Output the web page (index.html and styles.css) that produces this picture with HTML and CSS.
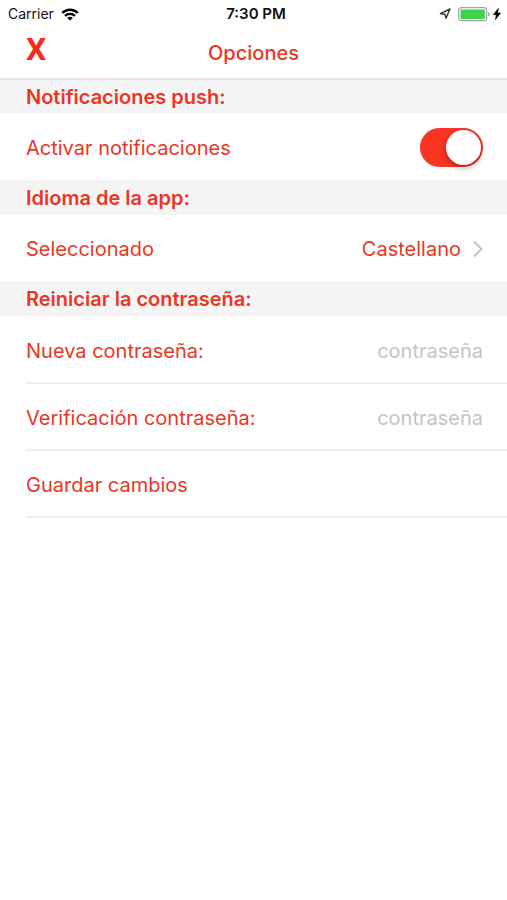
FILE: index.html
```html
<!DOCTYPE html>
<html lang="es">
<head>
<meta charset="utf-8">
<meta name="viewport" content="width=device-width, initial-scale=1">
<title>Opciones</title>
<link rel="stylesheet" href="styles.css">
</head>
<body>
<header class="top">
  <div class="status">
    <div class="status-left">
      <span>Carrier</span>
      <svg class="wifi" viewBox="0 0 18 13" aria-hidden="true"><path d="M1.2 5a11 11 0 0 1 15.6 0M4 7.9a7.1 7.1 0 0 1 10 0" fill="none" stroke="#000" stroke-width="2.3"/><path d="M9 12.6 6.2 10a4 4 0 0 1 5.6 0z"/></svg>
    </div>
    <span class="time">7:30 PM</span>
    <div class="status-right">
      <svg class="location" viewBox="0 0 12 12" aria-hidden="true"><path d="M11 1 7 10.3 6 6.2 1.4 5.7z" fill="none" stroke="#333" stroke-width="1.4" stroke-linejoin="round"/></svg>
      <svg class="battery" viewBox="0 0 32 15" aria-hidden="true"><rect x=".7" y=".7" width="28" height="13" rx="2.8" fill="#fff" stroke="#a3a3a3" stroke-width="1.2"/><rect x="2.5" y="2.5" width="24.4" height="9.4" rx="1" fill="#3fd44f"/><path d="M30 5v4.6q1.6-.6 1.6-2.3T30 5z" fill="#a3a3a3"/></svg>
      <svg class="bolt" viewBox="0 0 8 12" aria-hidden="true"><path d="M5.5.2.3 6.7h3L2.3 11.8 7.7 5H4.6z" stroke="#000" stroke-width=".5"/></svg>
    </div>
  </div>
  <div class="nav">
    <button class="close" type="button" aria-label="Cerrar">X</button>
    <h1>Opciones</h1>
  </div>
</header>
<main>
  <section>
    <h2 class="first">Notificaciones push:</h2>
    <div class="row">
      <label for="push">Activar notificaciones</label>
      <input class="switch" id="push" type="checkbox" role="switch" checked>
    </div>
  </section>
  <section>
    <h2>Idioma de la app:</h2>
    <a class="row" href="#idioma">
      <span>Seleccionado</span>
      <span class="value">Castellano
        <svg class="chevron" viewBox="0 0 10 18" aria-hidden="true"><path d="m1 1.5 7.5 7.5L1 16.5" fill="none" stroke="#c4c4c8" stroke-width="2"/></svg>
      </span>
    </a>
  </section>
  <form>
    <h2>Reiniciar la contraseña:</h2>
    <div class="row lined">
      <label for="nueva">Nueva contraseña:</label>
      <input class="field" id="nueva" type="password" placeholder="contraseña">
    </div>
    <div class="row lined">
      <label for="verificar">Verificación contraseña:</label>
      <input class="field" id="verificar" type="password" placeholder="contraseña">
    </div>
    <button class="row lined" type="button">Guardar cambios</button>
  </form>
</main>
</body>
</html>
```
FILE: styles.css
```css
* { box-sizing: border-box; }

body {
  margin: 0;
  background: #fff;
  color: #eb3625;
  font: 20px/24px Inter, "Liberation Sans", sans-serif;
}

button, input { font: inherit; color: inherit; }
svg { display: block; flex: none; }

.top { border-bottom: 2px solid #e4e4e4; }

.status {
  display: grid;
  grid-template-columns: 1fr auto 1fr;
  align-items: center;
  height: 28px;
  padding: 0 6px 0 8px;
  color: #111;
  font-size: 14px;
}
.status-left, .status-right { display: flex; align-items: center; }
.status-left { gap: 7px; }
.status-right { justify-content: flex-end; gap: 3px; }
.wifi { width: 18px; height: 13px; }
.time { padding-left: 3px; font-size: 15px; font-weight: 600; }
.location { width: 12px; height: 12px; margin-right: 4px; }
.battery { width: 32px; height: 15px; }
.bolt { width: 8px; height: 12px; }

.nav {
  display: grid;
  grid-template-columns: 1fr auto 1fr;
  align-items: center;
  height: 50px;
  padding: 0 26px;
}
.close {
  justify-self: start;
  padding: 0 0 8px;
  border: 0;
  background: none;
  color: #f52c1c;
  font: bold 32px/34px Roboto, sans-serif;
}
h1, h2 { margin: 0; font-size: 20px; }
h1 { font-weight: 500; }

h2 {
  height: 35px;
  padding: 6px 26px;
  background: #f5f5f5;
  font-weight: 600;
}
.first { height: 34px; padding-top: 5px; }

.row {
  display: flex;
  align-items: center;
  justify-content: space-between;
  height: 66px;
  padding: 2px 24px 0 26px;
  color: inherit;
  text-decoration: none;
}
.value { display: flex; align-items: center; gap: 12px; }
.chevron { width: 10px; height: 18px; }

.lined {
  height: 67px;
  margin-left: 26px;
  padding: 2px 24px 0 0;
  border: 0;
  border-bottom: 2px solid #efeff0;
}
form { padding-bottom: 24px; }
form h2 { margin-bottom: 1px; }
button.row { width: calc(100% - 26px); background: none; }

.field {
  flex: 1;
  min-width: 0;
  padding: 0;
  border: 0;
  outline: 0;
  background: none;
  text-align: right;
}
.field::placeholder { color: #c4c4c6; opacity: 1; }

.switch {
  appearance: none;
  display: flex;
  width: 63px;
  height: 39px;
  margin: 0 0 2px;
  padding: 2px;
  border-radius: 20px;
  background: #ddd;
}
.switch::before {
  content: "";
  width: 35px;
  height: 35px;
  border-radius: 50%;
  background: #fff;
  box-shadow: 0 3px 6px rgba(0, 0, 0, .3);
}
.switch:checked { justify-content: flex-end; background: #fa3423; }
```
